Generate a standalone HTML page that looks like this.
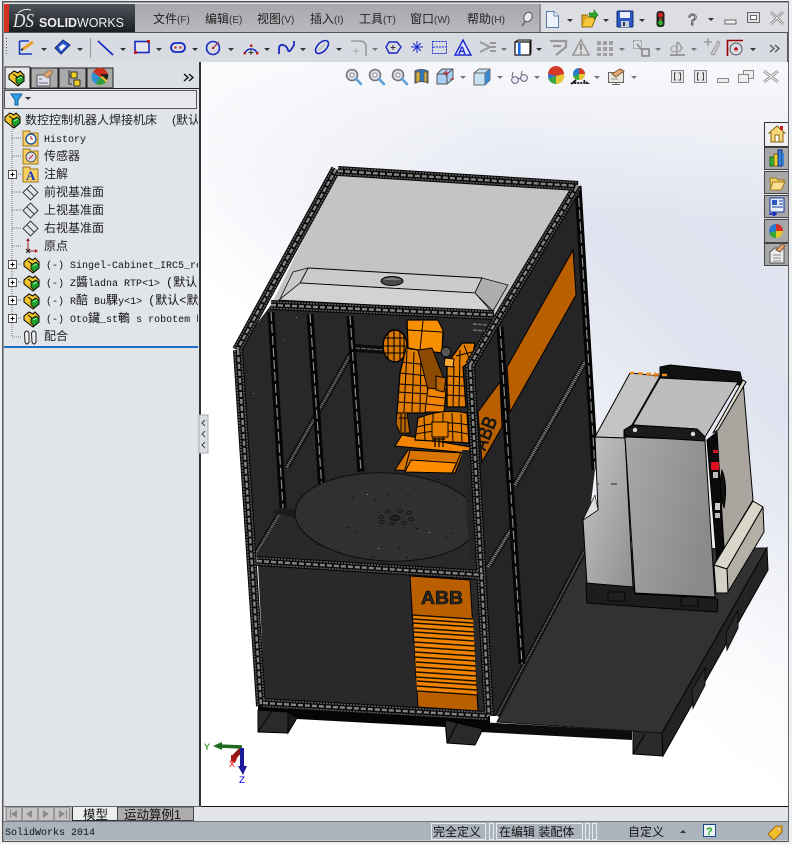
<!DOCTYPE html>
<html><head><meta charset="utf-8"><style>
html,body{margin:0;padding:0;background:#eef0f3}
svg{display:block;position:absolute;left:0;top:0}
.c{font-family:"Liberation Sans","WenQuanYi Zen Hei","Noto Sans CJK SC",sans-serif;font-size:12px;fill:#222}
.m{font-family:"Liberation Mono","WenQuanYi Zen Hei","Noto Sans CJK SC",monospace;font-size:10px;fill:#111}
.l{font-size:10px;fill:#333}
</style></head><body>
<svg width="792" height="844" viewBox="0 0 792 844" xmlns="http://www.w3.org/2000/svg">
<defs>
<linearGradient id="bg" x1="201" y1="806" x2="788" y2="180" gradientUnits="userSpaceOnUse"><stop offset="0" stop-color="#fff"/><stop offset=".45" stop-color="#fff"/><stop offset=".8" stop-color="#dfe3ef"/><stop offset="1" stop-color="#e3e6f0"/></linearGradient>
<linearGradient id="bg2" x1="0" y1="62" x2="0" y2="220" gradientUnits="userSpaceOnUse"><stop offset="0" stop-color="#fff" stop-opacity=".75"/><stop offset="1" stop-color="#fff" stop-opacity="0"/></linearGradient>
<linearGradient id="bg3" x1="0" y1="520" x2="0" y2="806" gradientUnits="userSpaceOnUse"><stop offset="0" stop-color="#fff" stop-opacity="0"/><stop offset="1" stop-color="#fff" stop-opacity=".9"/></linearGradient>
<linearGradient id="menu" x1="0" y1="4" x2="0" y2="32" gradientUnits="userSpaceOnUse"><stop offset="0" stop-color="#a5a7ac"/><stop offset="1" stop-color="#b8babe"/></linearGradient>
<linearGradient id="logo" x1="0" y1="4" x2="0" y2="32" gradientUnits="userSpaceOnUse"><stop offset="0" stop-color="#50535a"/><stop offset="1" stop-color="#1b1e25"/></linearGradient>
<linearGradient id="gl" x1="0" y1="0" x2="1" y2="1"><stop offset="0" stop-color="#c6c6c6"/><stop offset="1" stop-color="#909090"/></linearGradient>
<linearGradient id="gf" x1="0" y1="0" x2="1" y2=".4"><stop offset="0" stop-color="#a8a8a8"/><stop offset="1" stop-color="#8a8a8a"/></linearGradient>
<g id="fr" fill="none">
<path d="M338,171 L578,186"/><path d="M336,169 L237,350"/><path d="M577,187 L470,365"/><path d="M271,305 L494,315"/>
<path d="M238,350 L261,706"/><path d="M470,365 L489,716"/><path d="M257,561 L483,575"/><path d="M263,703 L488,716"/>
</g>
<g id="fr2" fill="none">
<path d="M578,186 L595,470"/><path d="M500,327 L522,664"/><path d="M271,312 L283,508"/><path d="M310,314 L322,490"/><path d="M350,316 L361,472"/>
</g>
<g id="asm"><path d="M1,5 L6,1 L10,3 L12,1 L16,5 L16,11 L10,16 L1,9Z" fill="#f3c52c" stroke="#000"/><path d="M8,8 L13,5 L16,8 L16,11 L11,15 L8,12Z" fill="#1fa02c" stroke="#000" stroke-width=".8"/><path d="M10,9 L14,7" stroke="#8ef08e"/><path d="M5,4 L9,7" stroke="#000" stroke-width=".8"/></g>
<g id="pl"><path d="M7.5,0 L15,7.5 L7.5,15 L0,7.5Z" fill="none" stroke="#333" stroke-width=".9"/><path d="M3.5,3.5 L11,11" stroke="#333" stroke-width=".9" fill="none"/></g>
<g id="pm"><rect x=".5" y=".5" width="8" height="8" fill="#fff" stroke="#555"/><path d="M2.500,4.500H6.500M4.500,2.500V6.500" stroke="#000"/></g>
<path id="ar" d="M0,0H6L3,3Z" fill="#333"/>
<path id="arg" d="M0,0H6L3,3Z" fill="#777"/>
<g id="mag"><circle cx="7" cy="7" r="5.5" fill="#dde" stroke="#777" stroke-width="1.6"/><circle cx="7" cy="7" r="2" fill="#fff" stroke="#888"/><path d="M11,11 L16,16" stroke="#5a9fd8" stroke-width="2.6" stroke-linecap="round"/></g>
</defs>

<!-- window -->
<rect width="792" height="844" fill="#eef0f3"/>
<rect x="2" y="1" width="786" height="841" fill="#e2e5ea"/>
<!-- viewport -->
<rect x="201" y="62" width="587" height="745" fill="url(#bg)"/>
<rect x="201" y="62" width="587" height="160" fill="url(#bg2)"/>
<rect x="201" y="520" width="587" height="287" fill="url(#bg3)"/>

<!-- floor plate -->
<g>
<path d="M480,722 L632,731 L632,740 L480,732Z" fill="#0c0c0c"/>
<path d="M633,731 L662,733 L663,756 L633,754Z" fill="#2a2a2a" stroke="#000"/>
<path d="M633,754 L645,734" stroke="#000"/>
<path d="M497,722 L585,550 L767,548 L662,733Z" fill="#323232" stroke="#111"/>
<path d="M662,733 L767,548 L768,570 L663,756Z" fill="#232323" stroke="#000"/>
<path d="M692,690 L705,668 L705,685 L693,708Z M726,633 L738,610 L738,628 L727,650Z" fill="#2b2b2b" stroke="#0a0a0a"/>
<!-- pallet under front -->
<path d="M258,703 L490,716 L490,730 L445,727 L297,719 L258,712Z" fill="#050505"/>
<path d="M258,710 L288,712 L288,733 L258,732Z" fill="#2a2a2a" stroke="#000"/>
<path d="M288,712 L297,718 L288,733Z" fill="#1c1c1c" stroke="#000"/><path d="M258,732 L272,711" stroke="#000"/>
<path d="M445,720 L483,729 L475,745 L447,743Z" fill="#2a2a2a" stroke="#000"/><path d="M447,743 L458,722" stroke="#000"/>
</g>

<!-- right side panel -->
<path d="M470,365 L578,187 L595,470 L585,550 L497,716 L489,716Z" fill="#252427"/>
<path d="M507,367 L573,250 L576,295 L510,412Z" fill="#b95f00" stroke="#000"/>
<path d="M478,412 L500,382 L502,427 L482,462Z" fill="#b95f00" stroke="#000"/>
<text x="0" y="0" transform="translate(485,452) rotate(-68) scale(1,1.3)" font-family="Liberation Sans" font-weight="bold" font-size="16" fill="#161616">ABB</text>

<!-- interior back -->
<path d="M237,350 L271,305 L494,315 L470,365 L483,575 L257,561Z" fill="#28282a"/>
<!-- top face -->
<path d="M338,170 L578,186 L493,315 L271,305Z" fill="#c4c4c4"/>
<path d="M308,268 L482,278 L475,293 L300,283Z" fill="#cbcbcb" stroke="#000"/>
<path d="M300,283 L475,293 L491,311 L279,300Z" fill="#d2d2d2" stroke="#000" stroke-width=".8"/>
<path d="M482,278 L508,285 L493,311 L475,293Z" fill="#aeaeae" stroke="#111" stroke-width=".8"/>
<path d="M300,283 L308,268 L293,272 L280,299Z" fill="#c8c8c8" stroke="#111" stroke-width=".8"/>
<ellipse cx="392" cy="281" rx="11" ry="4.500" fill="#4a4a4a" stroke="#000"/>
<path d="M383,280 Q392,275 401,280" fill="#7a7a7a"/>

<!-- interior beams -->
<path d="M355,348 L384,350" stroke="#0d0d0d" stroke-width="8" fill="none"/>
<path d="M355,348 L384,350" stroke="#777" stroke-width="1" stroke-dasharray="5 1" fill="none"/>
<path d="M473,324 L488,325 M473,330 L486,331" stroke="#777" stroke-width="1.4" stroke-dasharray="4 1"/>
<path d="M257,552 L283,508 M287,467 L353,350" stroke="#101010" stroke-width="6" fill="none"/>
<path d="M257,552 L283,508 M287,467 L353,350" stroke="#888" stroke-width="2.6" stroke-dasharray="1 1" fill="none"/>
<path d="M488,567 L515,523 M515,485 L585,362" stroke="#101010" stroke-width="6" fill="none"/>
<path d="M488,567 L515,523 M515,485 L585,362" stroke="#999" stroke-width="3" stroke-dasharray="1 1" fill="none"/>
<path d="M497,716 L585,550" stroke="#101010" stroke-width="5" fill="none"/>
<path d="M497,716 L585,550" stroke="#8a8170" stroke-width="1.6" stroke-dasharray="1 1" fill="none"/>
<use href="#fr2" stroke="#050505" stroke-width="7"/>
<use href="#fr2" stroke="#8c8c8c" stroke-width="1.2" stroke-dasharray="9 3"/>

<!-- robot -->
<g stroke="#000" stroke-width="1" stroke-linejoin="round">
<!-- pedestal -->
<path d="M408,450 L463,453 L455,473 L395,470Z" fill="#d87400"/>
<path d="M405,472 L411,460 L457,463 L452,473Z" fill="#ff8c00"/>
<path d="M410,450 L405,470 M461,453 L452,473" fill="none"/>
<!-- ball -->
<ellipse cx="395" cy="346" rx="12" ry="16" fill="#d87800" stroke-width="1.5"/>
<path d="M384,338 H406 M383,346 H407 M384,353 H406 M388,332 V360 M394,330 V362 M400,331 V361 M404,335 V356" fill="none" stroke-width="1.1"/>
<!-- upper arm -->
<path d="M407,320 L438,320 L443,330 L442,353 L418,350 L408,348Z" fill="#f79000" stroke-width="1.3"/>
<path d="M423,321 L420,350 M408,330 L442,332" fill="none"/>
<!-- lower left arm -->
<path d="M406,348 L418,350 L430,352 L428,375 L427,413 L397,413 L400,373Z" fill="#e07c00" stroke-width="1.3"/>
<path d="M401,362 L428,365 M400,373 L428,376 M399,384 L428,386 M398,392 L428,394 M398,402 L428,404 M407,350 L404,412 M414,352 L412,412 M421,352 L420,412" fill="none"/>
<!-- centre -->
<path d="M418,350 L432,348 L447,387 L445,392 L428,390Z" fill="#8c4a00"/>
<path d="M428,388 L446,390 L444,412 L425,412Z" fill="#f08400"/>
<path d="M428,396 L445,398 M427,404 L444,406" fill="none"/>
<circle cx="446" cy="352" r="5" fill="#555" stroke-width="1"/>
<!-- right arm -->
<path d="M447,367 L452,357 L462,343 L475,343 L472,360 L463,367 L466,407 L447,407Z" fill="#e07c00" stroke-width="1.3"/>
<path d="M447,376 L464,377 M447,385 L465,386 M447,395 L466,396 M454,366 L453,407 M460,350 L459,407 M464,345 L469,358 M456,356 L472,352" fill="none"/>
<path d="M445,358 L454,359 L453,367 L444,366Z" fill="#ffaa30"/>
<path d="M436,376 L446,378 L444,392 L436,390Z" fill="#b86200"/>
<!-- left tool -->
<path d="M397,413 L407,413 L410,433 L400,433 L396,424Z" fill="#b86400"/>
<path d="M399,418 H408 M401,414 V432 M405,414 V432" fill="none"/>
<!-- plate -->
<path d="M402,435 L470,447 L469,453 L395,446Z" fill="#f08400"/>
<!-- dome -->
<path d="M415,440 L418,418 Q443,408 467,413 L469,443 Z" fill="#e07c00" stroke-width="1.2"/>
<path d="M424,416 L425,440 M433,414 V442 M443,413 V442 M452,413 L453,443 M461,414 L462,443 M417,427 Q443,420 468,425 M416,434 Q443,428 468,434" fill="none"/>
<path d="M432,422 H448 V437 H432Z" fill="#e88000"/>
<path d="M435,438 V447 M439,438 V447 M443,438 V447 M433,439 H445" fill="none" stroke-width="1.2"/>
</g>
<!-- shelf -->
<path d="M283,510 L480,522 L483,570 L257,556Z" fill="#29292b"/>
<path d="M271,512 L283,508 L296,510 L295,518Z" fill="#1a1a1c"/>
<ellipse cx="387" cy="517" rx="92" ry="44" transform="rotate(3 387 517)" fill="#303032" stroke="#0d0d0d"/>
<path d="M473,450 L480,560 L470,560 L462,450Z" fill="#252527"/>
<g fill="none" stroke="#111" stroke-width=".9">
<ellipse cx="395" cy="518" rx="5" ry="2.500"/><ellipse cx="395" cy="518" rx="3" ry="1.400"/>
<ellipse cx="381" cy="517" rx="2.500" ry="1.400"/><ellipse cx="388" cy="512" rx="2.500" ry="1.400"/><ellipse cx="400" cy="511" rx="2.500" ry="1.400"/><ellipse cx="409" cy="513" rx="2.500" ry="1.400"/><ellipse cx="411" cy="519" rx="2.500" ry="1.400"/><ellipse cx="404" cy="523" rx="2.500" ry="1.400"/><ellipse cx="392" cy="524" rx="2.500" ry="1.400"/><ellipse cx="382" cy="522" rx="2.500" ry="1.400"/>
</g>
<g fill="#111"><rect x="352" y="497" width="2" height="1"/><rect x="374" y="499" width="2" height="1"/><rect x="387" y="494" width="2" height="1"/><rect x="407" y="495" width="2" height="1"/><rect x="438" y="479" width="2" height="1"/><rect x="445" y="484" width="2" height="1"/><rect x="455" y="500" width="2" height="1"/><rect x="468" y="500" width="2" height="1"/><rect x="335" y="530" width="2" height="1"/><rect x="348" y="527" width="2" height="1"/><rect x="356" y="532" width="2" height="1"/><rect x="416" y="528" width="2" height="1"/><rect x="445" y="537" width="2" height="1"/><rect x="450" y="533" width="2" height="1"/><rect x="372" y="557" width="2" height="1"/><rect x="398" y="548" width="2" height="1"/><rect x="406" y="557" width="2" height="1"/><rect x="425" y="554" width="2" height="1"/><rect x="317" y="544" width="2" height="1"/></g>
<!-- lower panel -->
<path d="M258,565 L480,578 L489,714 L265,700Z" fill="#29292b"/>
<path d="M410,576 L470,580 L478,711 L418,707Z" fill="#b95f00" stroke="#000"/>
<text x="421" y="604" font-family="Liberation Sans" font-weight="bold" font-size="18" fill="#2a2a2a" stroke="#000" stroke-width=".6" textLength="42" lengthAdjust="spacingAndGlyphs">ABB</text>
<path d="M413,614 L473,618 L477,696 L417,692Z" fill="#f08400"/>
<g stroke="#1a1000" fill="none" stroke-width="1.500">
<path d="M413,615 L473,619"/><path d="M413,619 L473,623"/><path d="M413,623 L474,627"/><path d="M414,628 L474,632"/><path d="M414,632 L474,636"/><path d="M414,637 L474,641"/><path d="M414,642 L475,646"/><path d="M415,647 L475,651"/><path d="M415,652 L475,656"/><path d="M415,657 L476,661"/><path d="M416,662 L476,666"/><path d="M416,667 L476,671"/><path d="M416,672 L476,676"/><path d="M416,677 L476,681"/><path d="M417,681 L477,685"/><path d="M417,686 L477,690"/><path d="M417,691 L477,695"/>
</g>

<!-- main frame -->
<use href="#fr" stroke="#050505" stroke-width="10"/>
<use href="#fr" stroke="#5c5c5c" stroke-width="8" stroke-dasharray="2 1"/>
<use href="#fr" stroke="#0a0a0a" stroke-width="5"/>
<use href="#fr" stroke="#858585" stroke-width="2.400" stroke-dasharray="5 2"/>

<!-- specks -->
<g fill="#d07010"><rect x="296" y="317" width="1" height="1"/><rect x="283" y="340" width="1" height="1"/><rect x="253" y="393" width="1" height="1"/></g>
<g fill="#4c8"><rect x="367" y="494" width="1" height="1"/><rect x="429" y="532" width="1" height="1"/><rect x="378" y="548" width="1" height="1"/></g>

<!-- controller -->
<g stroke="#000" stroke-linejoin="round">
<path d="M660,367 L670,365 L740,372 L742,380 L740,385 L660,378Z" fill="#111"/>
<path d="M630,373 L660,376 L632,425 L624,430 L624,438 L595,437Z" fill="#c4c4c4"/>
<path d="M660,378 L738,382 L705,437 L697,429 L633,425Z" fill="#bdbdbd"/>
<path d="M743,381 L753,500 L722,552 L712,440Z" fill="#aaa69f"/>
<path d="M743,380 L746,382 L718,430 L713,433Z" fill="#dedccf"/>
<path d="M707,440 L717,432 L724,547 L717,563 Z" fill="#0b0b0b"/>
<path d="M753,501 L763,507 L727,569 L714,565Z" fill="#d9d7c9"/>
<path d="M763,507 L764,532 L728,592 L727,569Z" fill="#b3afa5"/>
<path d="M714,565 L727,569 L728,593 L716,593Z" fill="#d3d1c5"/>
<path d="M595,437 L625,438 L633,587 L587,585 L583,520 L598,510Z" fill="url(#gl)"/>
<path d="M598,510 L583,520 L595,495Z" fill="#ddd" stroke-width=".6"/>
<path d="M586,583 L633,587 L635,594 L715,598 L718,600 L717,612 L587,603Z" fill="#1d1d1d"/>
<path d="M625,437 L705,440 L715,597 L635,593Z" fill="url(#gf)"/>
<path d="M624,430 L633,425 L697,429 L705,437 L705,441 L625,436Z" fill="#1a1a1a"/>
<path d="M608,592 H625 V601 H608Z M681,597 H698 V606 H681Z" fill="#1f1f1f" stroke-width=".8"/>
<path d="M722,470 Q728,485 724,508 Q718,490 722,470Z" fill="#111"/>
</g>
<circle cx="635" cy="430" r="2.200" fill="#ddd"/><circle cx="693" cy="434" r="2.200" fill="#ddd"/>
<rect x="711" y="462" width="8" height="8" rx="1" fill="#e01020"/><rect x="713" y="450" width="5" height="3" fill="#d01020"/>
<rect x="713" y="472" width="5" height="6" fill="#bbb"/><rect x="715" y="503" width="5" height="7" fill="#ccc"/><rect x="715" y="513" width="5" height="5" fill="#bbb"/>
<path d="M630,373 H634 M638,373.500 H643 M646,374 H651 M655,374.500 H659 M662,375 H667" stroke="#f08a1a" stroke-width="2.400"/>
<path d="M655,372 V378 M651,375 H659" stroke="#e07c10"/>
<path d="M597,484 H599 M611,484 H617" stroke="#222"/>

<!-- triad -->
<path d="M242,747 L219,746" stroke="#1e6a1e" stroke-width="3.500"/><path d="M213,746 L222,742 L222,750Z" fill="#1e6a1e"/>
<path d="M241,750 L234,757" stroke="#8a1818" stroke-width="5"/><path d="M231,755 L238,756 L235,763 L231,761Z" fill="#a81818"/>
<path d="M242,748 V767" stroke="#1c1c9a" stroke-width="4"/><path d="M238,766 H247 L243,775Z" fill="#1c1c9a"/>
<g font-family="Liberation Mono" font-size="10"><text x="204" y="750" fill="#0a8a0a">Y</text><text x="229" y="767" fill="#f00">X</text><text x="239" y="783" fill="#00f">Z</text></g>

<!-- top bar -->
<rect x="135" y="4" width="405" height="28" fill="url(#menu)"/>
<rect x="541" y="4" width="247" height="28" fill="#dcdee2"/>
<rect x="539" y="4" width="2" height="28" fill="#8e9095"/>
<rect x="4" y="4" width="5" height="28" fill="#d43322"/>
<rect x="9" y="4" width="126" height="28" fill="url(#logo)"/>
<rect x="4" y="32" width="784" height="1" fill="#555"/>
<rect x="4" y="33" width="784" height="29" fill="#d8dbe1"/>
<text x="13" y="27" font-family="Liberation Serif" font-style="italic" font-size="20" fill="#e8e8e8" textLength="21" lengthAdjust="spacingAndGlyphs">DS</text>
<path d="M18,13 Q24,8 31,10" stroke="#eee" fill="none"/>
<text x="39" y="27" font-family="Liberation Sans" font-size="13" fill="#eee" font-weight="bold" textLength="85" lengthAdjust="spacingAndGlyphs">SOLID<tspan font-weight="normal">WORKS</tspan></text>
<g class="c">
<text x="153" y="23">文件<tspan class="l">(F)</tspan></text><text x="205" y="23">编辑<tspan class="l">(E)</tspan></text><text x="257" y="23">视图<tspan class="l">(V)</tspan></text><text x="310" y="23">插入<tspan class="l">(I)</tspan></text><text x="359" y="23">工具<tspan class="l">(T)</tspan></text><text x="410" y="23">窗口<tspan class="l">(W)</tspan></text><text x="467" y="23">帮助<tspan class="l">(H)</tspan></text>
</g>
<!-- pin -->
<path d="M522,26 L526,20" stroke="#666" stroke-width="1.500"/><ellipse cx="528" cy="17" rx="4" ry="5" transform="rotate(30 528 17)" fill="#e8e8ee" stroke="#555"/>
<!-- top right icons -->
<path d="M546.500,11.500 H554 L558.500,16 V27.500 H546.500Z" fill="#eef3fb" stroke="#5a7ca8"/><path d="M554,11.500 V16 H558.500" fill="#fff" stroke="#5a7ca8"/>
<use href="#ar" x="567" y="19"/>
<path d="M582,17 H590 L596,17 L592,27 H582Z" fill="#f7c83a" stroke="#8a6a10"/><path d="M582,27 V15 H588" fill="#e0a820" stroke="#8a6a10"/><path d="M589,13 L594,13 L594,10 L598,15 L594,19 L594,17 L590,17Z" fill="#2ca82c" stroke="#176a17" stroke-width=".6"/>
<use href="#ar" x="603" y="19"/>
<rect x="617" y="11" width="16" height="16" rx="1" fill="#2a58c0" stroke="#102a70"/><rect x="620" y="12" width="10" height="6" fill="#eef"/><rect x="621" y="21" width="8" height="6" fill="#c8d0dc"/><rect x="623" y="22" width="2" height="4" fill="#335"/>
<use href="#ar" x="639" y="19"/>
<rect x="656.500" y="11" width="8" height="16" rx="3" fill="#222"/><circle cx="660.500" cy="15" r="2.400" fill="#e02020"/><circle cx="660.500" cy="19.500" r="1.600" fill="#805020"/><circle cx="660.500" cy="23" r="2.400" fill="#30b030"/>
<text x="688" y="25" font-family="Liberation Sans" font-size="16" fill="#fff" stroke="#555" stroke-width=".9">?</text>
<use href="#ar" x="708" y="18"/>
<rect x="725" y="20" width="11" height="4" fill="#eee" stroke="#666"/>
<rect x="747.500" y="12.500" width="12" height="10" fill="none" stroke="#666"/><rect x="750.500" y="15.500" width="6" height="4" fill="#fff" stroke="#666"/>
<path d="M771,12 L783,24 M783,12 L771,24" stroke="#777" stroke-width="2.600"/><path d="M771,12 L783,24 M783,12 L771,24" stroke="#eee" stroke-width="1"/>

<!-- toolbar 2 grip -->
<g fill="#555"><rect x="6" y="38" width="1" height="1"/><rect x="6" y="41" width="1" height="1"/><rect x="6" y="44" width="1" height="1"/><rect x="6" y="47" width="1" height="1"/><rect x="6" y="50" width="1" height="1"/><rect x="6" y="53" width="1" height="1"/></g>
<!-- sketch -->
<path d="M19.500,41 V54 H32 M19.500,41 H29" fill="none" stroke="#1838c0" stroke-width="1.600"/><path d="M23,49 L33,42" stroke="#e8a030" stroke-width="3"/><path d="M21,50 L23,49" stroke="#222" stroke-width="2"/>
<use href="#ar" x="41" y="48"/>
<path d="M55,48 L63,40 L70,45 L61,54Z" fill="#2858d0" stroke="#102a70"/><path d="M59,47 L63,44 L66,46 L61,51Z" fill="#fff"/>
<use href="#ar" x="77" y="48"/>
<rect x="90" y="38" width="1" height="20" fill="#999"/>
<path d="M98,41 L113,55" stroke="#182ac0" stroke-width="1.800"/><use href="#ar" x="120" y="48"/>
<rect x="135" y="41.500" width="14" height="11" fill="#fff" fill-opacity=".25" stroke="#182ac0" stroke-width="1.600"/><rect x="147" y="40" width="3" height="3" fill="#c02020"/><rect x="134" y="51" width="3" height="3" fill="#c02020"/><use href="#ar" x="156" y="48"/>
<rect x="171" y="43" width="14" height="9" rx="4.500" fill="none" stroke="#182ac0" stroke-width="1.800"/><rect x="174.500" y="46.500" width="2" height="2" fill="#c02020"/><rect x="179.500" y="46.500" width="2" height="2" fill="#c02020"/><use href="#ar" x="192" y="48"/>
<circle cx="213" cy="48" r="6.500" fill="none" stroke="#182ac0" stroke-width="1.600"/><path d="M213,48 L219,42" stroke="#a02020"/><rect x="212" y="47" width="2" height="2" fill="#c02020"/><use href="#ar" x="228" y="48"/>
<path d="M245,53 A6.500,6.500 0 0 1 257,53" fill="none" stroke="#182ac0" stroke-width="1.600"/><path d="M251,50 V55 M248.500,52.500 H253.500" stroke="#333"/><rect x="243.500" y="52" width="2.400" height="2.400" fill="#c02020"/><rect x="256" y="52" width="2.400" height="2.400" fill="#c02020"/><rect x="250" y="44.500" width="2.400" height="2.400" fill="#c02020"/><use href="#ar" x="264" y="48"/>
<path d="M279,54 V49 Q279,44 283,45 T288,50 T294,45 V41" fill="none" stroke="#182ac0" stroke-width="1.800"/><use href="#ar" x="300" y="48"/>
<ellipse cx="322" cy="47" rx="8" ry="4.500" transform="rotate(-45 322 47)" fill="none" stroke="#182ac0" stroke-width="1.600"/><path d="M319,50 L325,44" stroke="#888" stroke-dasharray="1 1"/><use href="#ar" x="336" y="48"/>
<path d="M351,41 H360 Q366,41 366,47 V56" fill="none" stroke="#999" stroke-width="1.600"/><path d="M356,48 V54 M353,51 H359" stroke="#aaa"/><use href="#arg" x="372" y="48"/>
<path d="M389,42 H397 L401,47 L397,53 H389 L386,47Z" fill="none" stroke="#182ac0" stroke-width="1.400"/><path d="M393,45 V50 M390.500,47.500 H395.500" stroke="#333"/>
<path d="M411,47 H423 M417,41 V53 M413,43 L421,51 M421,43 L413,51" stroke="#1828d0" stroke-width="1"/>
<rect x="432.500" y="41.500" width="14" height="12" fill="none" stroke="#1828d0" stroke-dasharray="2 1"/><path d="M433,47 H446" stroke="#1828d0" stroke-dasharray="2 1"/>
<path d="M463,40 L471,55 H455Z" fill="#dfe6fa" stroke="#1828d0" stroke-width="1.400"/><text x="458" y="54" font-family="Liberation Sans" font-weight="bold" font-size="11" fill="#1828d0">A</text>
<path d="M480,42 L490,47 M480,52 L490,47 M490,43 H496 M490,47 H496 M490,51 H496" stroke="#999" stroke-width="2"/><use href="#arg" x="501" y="48"/>
<rect x="515" y="42" width="15" height="13" fill="#fff" stroke="#111" stroke-width="1.200"/><path d="M515,42 L518,40 H531 V53 L530,55 M530,42 L531,40" fill="none" stroke="#111"/><rect x="518" y="43" width="2.600" height="12" fill="#1a6ae0"/><use href="#ar" x="536" y="48"/>
<path d="M550,41 H566 V47 L556,55 M553,46 H561" fill="none" stroke="#999" stroke-width="2.200"/>
<path d="M581,40 L589,55 H573Z" fill="#ddd" stroke="#999" stroke-width="1.600"/><rect x="580" y="44" width="2" height="6" fill="#888"/><rect x="580" y="51.500" width="2" height="2" fill="#888"/>
<g fill="#a0a0a0"><rect x="597" y="41" width="4" height="4"/><rect x="603" y="41" width="4" height="4"/><rect x="609" y="41" width="4" height="4"/><rect x="597" y="47" width="4" height="4"/><rect x="603" y="47" width="4" height="4"/><rect x="609" y="47" width="4" height="4"/><rect x="597" y="53" width="4" height="3"/><rect x="603" y="53" width="4" height="3"/><rect x="609" y="53" width="4" height="3"/></g><use href="#arg" x="619" y="48"/>
<rect x="633.500" y="40.500" width="8" height="8" fill="none" stroke="#999" stroke-dasharray="2 1"/><rect x="642" y="49" width="7" height="7" fill="none" stroke="#888" stroke-width="1.600"/><path d="M637,44 L642,50" stroke="#888" stroke-width="1.400"/><use href="#arg" x="655" y="48"/>
<path d="M670,55 H685" stroke="#888" stroke-width="1.600"/><circle cx="674" cy="49" r="3" fill="none" stroke="#999"/><path d="M677,42 V54 M678,42 L682,48 L679,52" fill="none" stroke="#999" stroke-width="1.400"/><use href="#arg" x="691" y="48"/>
<path d="M704,42 H712 M708,38 V46" stroke="#999" stroke-width="1.500"/><path d="M711,54 L718,41 L720,43 L714,55Z" fill="#ccc" stroke="#999"/>
<path d="M727.500,56 V40.500 H743" fill="none" stroke="#900" stroke-width="1.600"/><circle cx="736" cy="49" r="6" fill="none" stroke="#555"/><circle cx="736" cy="49" r="1.800" fill="#c01020"/><use href="#ar" x="750" y="48"/>
<path d="M770,45 L774,48.500 L770,52 M775,45 L779,48.500 L775,52" fill="none" stroke="#555" stroke-width="1.300"/>
<rect x="787" y="33" width="1" height="29" fill="#555"/>

<!-- view toolbar -->
<use href="#mag" x="345" y="68"/><use href="#mag" x="368" y="68"/><use href="#mag" x="391" y="68"/>
<path d="M415,71 Q421,68 428,71 V83 Q421,80 415,83Z" fill="#2a78c8" stroke="#555"/><path d="M416,72 L420,72 V81 L416,83Z M424,72 H427 V82 H424Z" fill="#d8b040" stroke="#665"/>
<path d="M437,74 L442,69 H453 V79 L447,84 H437Z" fill="#a8d0f0" stroke="#555"/><path d="M437,74 H447 V84 M447,74 L453,69" fill="none" stroke="#555"/><path d="M446,70 V76 M443,73 H449 M450,79 H454" stroke="#c02020"/>
<use href="#arg" x="460" y="76"/>
<path d="M474,73 L479,69 H490 V80 L485,85 H474Z" fill="#c8e0f4" stroke="#666"/><path d="M474,73 H485 V85 M485,73 L490,69" fill="none" stroke="#666"/><path d="M485,73 L490,69 V80 L485,85Z" fill="#3a88c8"/>
<use href="#arg" x="497" y="76"/>
<circle cx="515" cy="80" r="3.400" fill="#eef" stroke="#667"/><circle cx="524" cy="78" r="3.400" fill="#eef" stroke="#667"/><path d="M512,77 L513,72 M521,75 L522,71 M518,79 L521,78" stroke="#667" fill="none"/>
<use href="#arg" x="534" y="76"/>
<circle cx="556" cy="76" r="8" fill="#2a7ad0"/><path d="M556,76 L548,74 A8,8 0 0 1 564,74Z" fill="#d83a28"/><path d="M556,76 L564,74 A8,8 0 0 1 556,84Z" fill="#e6c830"/><path d="M556,76 V84 A8,8 0 0 1 548.500,79Z" fill="#3ca83c"/>
<circle cx="579" cy="74" r="6" fill="#2a7ad0"/><path d="M579,74 V68 A6,6 0 0 1 585,74Z" fill="#d83a28"/><path d="M579,74 H585 A6,6 0 0 1 579,80Z" fill="#e6c830"/><path d="M579,74 V80 A6,6 0 0 1 573,76Z" fill="#3ca83c"/><path d="M571,84 L576,80 L573,83 H587 L583,80" fill="none" stroke="#222" stroke-width="2" stroke-dasharray="2 1"/>
<use href="#arg" x="594" y="76"/>
<rect x="608.500" y="72.500" width="15" height="10" fill="#e8e8e0" stroke="#666"/><path d="M612,84.500 H620 M616,83 V85" stroke="#666"/><path d="M612,74 L620,69 L624,71 L616,77Z" fill="#e0a878" stroke="#8a5a30"/><path d="M611,79 H618" stroke="#999"/>
<use href="#arg" x="631" y="76"/>
<rect x="671.500" y="70.500" width="12" height="12" fill="#e8e8ea" stroke="#888"/><path d="M676,73 H674.500 V80 H676 M678.500,73 H680.500 V80 H678.500" fill="none" stroke="#444"/>
<rect x="694.500" y="70.500" width="12" height="12" fill="#e8e8ea" stroke="#888"/><path d="M699,73 H697.500 V80 H699 M702,73 H703.500 V80 H702" fill="none" stroke="#444"/>
<rect x="717.500" y="78.500" width="11" height="4" fill="#eee" stroke="#888"/>
<rect x="743.500" y="70.500" width="10" height="8" fill="#eee" stroke="#888"/><rect x="738.500" y="74.500" width="10" height="8" fill="#eee" stroke="#888"/>
<path d="M764,71 L778,82 M778,71 L764,82" stroke="#999" stroke-width="3"/><path d="M764,71 L778,82 M778,71 L764,82" stroke="#f2f2f2" stroke-width="1"/>

<!-- left panel -->
<rect x="4" y="62" width="195" height="745" fill="#e1e4e9"/>
<rect x="4" y="62" width="195" height="26" fill="#dcdfe4"/>
<rect x="199" y="62" width="2" height="745" fill="#333"/>
<rect x="4" y="88" width="195" height="1" fill="#222"/>
<rect x="5" y="67" width="25" height="22" fill="#e6e8ea" stroke="#222"/>
<rect x="31" y="68" width="27" height="20" fill="#aaa" stroke="#222"/>
<rect x="59" y="68" width="27" height="20" fill="#aaa" stroke="#222"/>
<rect x="87" y="68" width="26" height="20" fill="#aaa" stroke="#222"/>
<use href="#asm" x="8" y="70"/>
<rect x="37" y="75" width="13" height="11" fill="#dde" stroke="#555"/><path d="M39,79 H42 M39,83 H48" stroke="#666"/><path d="M43,75 L50,70 L53,72 L48,78Z" fill="#e0a878" stroke="#8a5a30" stroke-width=".7"/>
<path d="M69,70 V84 M69,76 H72 M69,84 H72" stroke="#333" fill="none"/><rect x="71" y="72" width="6" height="6" fill="#f2d020" stroke="#333"/><rect x="74" y="80" width="6" height="6" fill="#f2d020" stroke="#333"/>
<circle cx="100" cy="77" r="8" fill="#e6c030"/><path d="M100,77 L93,72 A8,8 0 0 1 108,75Z" fill="#d03020"/><path d="M100,77 L93,72 A8,8 0 0 0 96,84Z" fill="#3090d0"/><path d="M100,77 L96,84 A8,8 0 0 0 106,82Z" fill="#30a040"/><path d="M100,74 L108,74 A8,8 0 0 1 107,80 Z" fill="#222"/>
<path d="M184,74 L188,77.500 L184,81 M189,74 L193,77.500 L189,81" fill="none" stroke="#111" stroke-width="1.400"/>
<rect x="4.500" y="90.500" width="192" height="18" fill="#e6e8ec" stroke="#555"/>
<path d="M11,94 H22 L18,100 V105 H15 V100Z" fill="#2ea0e8" stroke="#1060a0"/>
<use href="#ar" x="25" y="97"/>

<!-- tree -->
<path d="M12,127 V319 M12,138 H22 M12,156 H22 M12,174 H22 M12,192 H22 M12,210 H22 M12,228 H22 M12,246 H22 M12,264 H22 M12,282 H22 M12,300 H22 M12,318 H22 M12,319 V337 H22" fill="none" stroke="#777" stroke-dasharray="1 1"/>
<use href="#asm" x="4" y="112"/>
<path d="M23,133 V131 H30 V133 H38 V146 H23Z" fill="#f6d060" stroke="#a07820"/><circle cx="31" cy="139" r="5" fill="#fff" stroke="#1a50b0" stroke-width="1.400"/><path d="M31,136 V139 H33" stroke="#c02020" fill="none"/>
<path d="M23,151 V149 H30 V151 H38 V164 H23Z" fill="#f6d060" stroke="#a07820"/><circle cx="31" cy="157" r="5" fill="#dde" stroke="#555"/><path d="M29,159 L33,155" stroke="#c02020"/>
<path d="M23,169 V167 H30 V169 H38 V182 H23Z" fill="#f6d060" stroke="#a07820"/><text x="26" y="180" font-family="Liberation Serif" font-weight="bold" font-size="13" fill="#1838c8">A</text>
<use href="#pl" x="23" y="185"/><use href="#pl" x="23" y="203"/><use href="#pl" x="23" y="221"/>
<path d="M28,240 V251 H37" fill="none" stroke="#a02020"/><path d="M26,241 L28,238 L30,241Z M35,249 L38,251 L35,253Z" fill="#a02020"/><path d="M26,249 L30,253 M30,249 L26,253" stroke="#222"/>
<use href="#asm" x="23" y="257"/><use href="#asm" x="23" y="275"/><use href="#asm" x="23" y="293"/><use href="#asm" x="23" y="311"/>
<use href="#pm" x="8" y="170"/><use href="#pm" x="8" y="260"/><use href="#pm" x="8" y="278"/><use href="#pm" x="8" y="296"/><use href="#pm" x="8" y="314"/>
<path d="M24.500,333 Q27,329 29,333 V342 Q27,346 25,342Z M31.500,333 Q34,329 36,333 V342 Q34,346 32,342Z" fill="#eee" stroke="#222"/>
<svg x="4" y="110" width="194" height="235">
<g class="m">
<text x="21" y="14" class="c">数控控制机器人焊接机床</text><text x="168" y="14" class="c">(默认</text>
<text x="40" y="32">History</text>
<text x="40" y="50" class="c">传感器</text>
<text x="40" y="68" class="c">注解</text>
<text x="40" y="86" class="c">前视基准面</text>
<text x="40" y="104" class="c">上视基准面</text>
<text x="40" y="122" class="c">右视基准面</text>
<text x="40" y="140" class="c">原点</text>
<text x="42" y="158">(-) Singel-Cabinet_IRC5_re</text>
<text x="42" y="176">(-) Z<tspan font-size="12">醬</tspan>ladna RTP&lt;1&gt; <tspan font-size="12">(默认</tspan>&lt;</text>
<text x="42" y="194">(-) R<tspan font-size="12">醅</tspan> Bu<tspan font-size="12">騍</tspan>y&lt;1&gt; <tspan font-size="12">(默认&lt;默认</tspan></text>
<text x="42" y="212">(-) Oto<tspan font-size="12">鑶</tspan>_st<tspan font-size="12">鵪</tspan> s robotem k</text>
<text x="40" y="230" class="c">配合</text>
</g></svg>
<rect x="4" y="346" width="194" height="2" fill="#1e6ec8"/>

<!-- collapse handle -->
<rect x="199" y="415" width="9" height="38" fill="#dadde2" stroke="#aaa"/>
<path d="M205,420 L202,423 L205,426 M205,431 L202,434 L205,437 M205,442 L202,445 L205,448" fill="none" stroke="#444"/>

<!-- side tabs -->
<rect x="764.500" y="122.500" width="24" height="24" fill="#f0f0f2" stroke="#333"/>
<rect x="764.500" y="147.500" width="24" height="22" fill="#a8a8aa" stroke="#444"/>
<rect x="764.500" y="171.500" width="24" height="22" fill="#a8a8aa" stroke="#444"/>
<rect x="764.500" y="195.500" width="24" height="22" fill="#a8a8aa" stroke="#444"/>
<rect x="764.500" y="219.500" width="24" height="23" fill="#a8a8aa" stroke="#444"/>
<rect x="764.500" y="243.500" width="24" height="22" fill="#a8a8aa" stroke="#444"/>
<path d="M769,133 L777,126 L785,133 H783 V142 H771 V133Z" fill="#f6d878" stroke="#8a6010"/><rect x="775" y="135" width="4" height="7" fill="#fff" stroke="#8a6010"/><rect x="780" y="126" width="3" height="4" fill="#c02020"/>
<rect x="770" y="157" width="4" height="9" fill="#30b040" stroke="#176a17"/><rect x="774" y="154" width="4" height="12" fill="#f0d030" stroke="#806010"/><rect x="778" y="150" width="4" height="16" fill="#3880d8" stroke="#102a70"/><rect x="782" y="153" width="2" height="13" fill="#3880d8"/>
<path d="M770,178 H776 L778,180 H784 L781,190 H771Z" fill="#f6d060" stroke="#a07820"/><path d="M770,190 L773,182 H785 L781,190Z" fill="#fbe090" stroke="#a07820"/>
<rect x="770" y="198" width="14" height="14" fill="#e8eef8" stroke="#183ca0"/><path d="M772,200 H777 V205 H772Z" fill="#2a58c0"/><path d="M779,201 H783 M779,204 H783 M772,207 H783" stroke="#183ca0"/><path d="M769,214 H775 M773,212 L776,214 L773,216" stroke="#1828c8" stroke-width="1.500" fill="none"/>
<circle cx="776" cy="231" r="7" fill="#2a78d0"/><path d="M776,231 V224 A7,7 0 0 1 783,231Z" fill="#d83020"/><path d="M776,231 H783 A7,7 0 0 1 776,238Z" fill="#e6c830"/><path d="M776,231 V238 A7,7 0 0 1 769,233Z" fill="#3ca83c"/>
<path d="M770,252 L775,248 H784 V263 H770Z" fill="#eee" stroke="#555"/><path d="M773,255 H781 M773,258 H781 M773,261 H781" stroke="#888"/><path d="M776,250 L782,244 L785,246 L780,252Z" fill="#e0a878" stroke="#8a5a30"/>

<!-- bottom strip -->
<rect x="4" y="806" width="784" height="16" fill="#e3e5ea"/>
<rect x="201" y="806" width="587" height="1" fill="#111"/>
<rect x="4" y="806" width="197" height="1" fill="#666"/>
<rect x="5" y="807" width="67" height="14" fill="#b8b8b8"/>
<g fill="#c4c4c4" stroke="#999"><rect x="6.500" y="807.500" width="15" height="13"/><rect x="22.500" y="807.500" width="15" height="13"/><rect x="38.500" y="807.500" width="15" height="13"/><rect x="54.500" y="807.500" width="15" height="13"/></g>
<g fill="#8a8a8a"><path d="M11,814 L17,810 V818Z M10,810 H11 V818 H10Z M26,814 L32,810 V818Z M43,810 L49,814 L43,818Z M59,810 L65,814 L59,818Z M66,810 H67 V818 H66Z"/></g>
<path d="M72.500,807 V820.500 H117.500 V807" fill="#eceef0" stroke="#333"/>
<path d="M117.500,807 H193.500 V820.500 H117.500Z" fill="#acacac" stroke="#444"/>
<text x="83" y="819" class="c" style="font-size:12.500px;fill:#111">模型</text>
<text x="124" y="819" class="c" style="font-size:12.500px;fill:#111">运动算例1</text>

<!-- status -->
<rect x="2" y="821" width="786" height="1" fill="#777"/>
<rect x="4" y="822" width="784" height="18" fill="#abb3bc"/>
<rect x="4" y="840" width="784" height="2" fill="#c8ccd2"/>
<text x="5" y="835" class="m">SolidWorks 2014</text>
<g fill="none" stroke="#e6e9ee"><rect x="431.500" y="823.500" width="54" height="16"/><rect x="489.500" y="823.500" width="4" height="16"/><rect x="496.500" y="823.500" width="86" height="16"/><rect x="585.500" y="823.500" width="4" height="16"/><rect x="592.500" y="823.500" width="4" height="16"/></g>
<g class="c" style="fill:#111"><text x="433" y="836">完全定义</text><text x="499" y="836">在编辑 装配体</text><text x="628" y="836">自定义</text></g>
<path d="M680,833 H686 L683,830Z" fill="#333"/>
<rect x="703.500" y="824.500" width="12" height="12" fill="#eef4f8" stroke="#184a88"/><text x="706" y="835" font-family="Liberation Sans" font-weight="bold" font-size="11" fill="#18a818">?</text>
<path d="M768,834 L776,826 L782,826 L782,832 L774,840 Z" fill="#f4c030" stroke="#a06a10"/><circle cx="779" cy="829" r="1.300" fill="#fff" stroke="#a06a10" stroke-width=".5"/>

<!-- window edges -->
<rect x="2" y="1" width="1.500" height="841" fill="#555"/>
<rect x="2" y="1" width="786" height="1.500" fill="#555"/>
<rect x="2" y="841" width="786" height="1" fill="#555"/>
<rect x="788" y="1" width="1" height="841" fill="#666"/>
</svg>
</body></html>
